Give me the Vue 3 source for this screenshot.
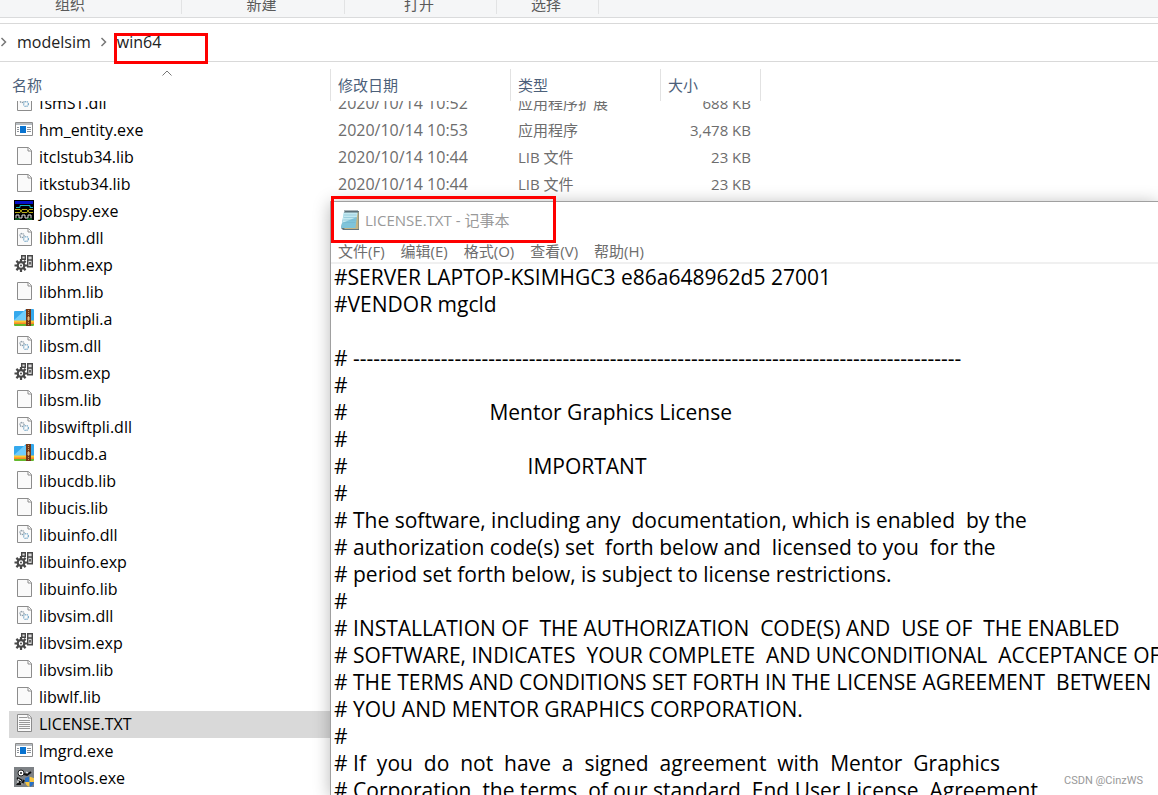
<script setup>
const groups = [
  { label: '组织', cls: 'g1' },
  { label: '新建', cls: 'g2' },
  { label: '打开', cls: 'g3' },
  { label: '选择', cls: 'g4' },
]

const files = [
  { name: 'fsmST.dll', icon: 'dll', date: '2020/10/14 10:52', type: '应用程序扩展', size: '688 KB' },
  { name: 'hm_entity.exe', icon: 'exe', date: '2020/10/14 10:53', type: '应用程序', size: '3,478 KB' },
  { name: 'itclstub34.lib', icon: 'lib', date: '2020/10/14 10:44', type: 'LIB 文件', size: '23 KB' },
  { name: 'itkstub34.lib', icon: 'lib', date: '2020/10/14 10:44', type: 'LIB 文件', size: '23 KB' },
  { name: 'jobspy.exe', icon: 'spy' },
  { name: 'libhm.dll', icon: 'dll' },
  { name: 'libhm.exp', icon: 'exp' },
  { name: 'libhm.lib', icon: 'lib' },
  { name: 'libmtipli.a', icon: 'zip' },
  { name: 'libsm.dll', icon: 'dll' },
  { name: 'libsm.exp', icon: 'exp' },
  { name: 'libsm.lib', icon: 'lib' },
  { name: 'libswiftpli.dll', icon: 'dll' },
  { name: 'libucdb.a', icon: 'zip' },
  { name: 'libucdb.lib', icon: 'lib' },
  { name: 'libucis.lib', icon: 'lib' },
  { name: 'libuinfo.dll', icon: 'dll' },
  { name: 'libuinfo.exp', icon: 'exp' },
  { name: 'libuinfo.lib', icon: 'lib' },
  { name: 'libvsim.dll', icon: 'dll' },
  { name: 'libvsim.exp', icon: 'exp' },
  { name: 'libvsim.lib', icon: 'lib' },
  { name: 'libwlf.lib', icon: 'lib' },
  { name: 'LICENSE.TXT', icon: 'txt', selected: true },
  { name: 'lmgrd.exe', icon: 'exe' },
  { name: 'lmtools.exe', icon: 'tools' },
]

const menus = ['文件(F)', '编辑(E)', '格式(O)', '查看(V)', '帮助(H)']

const license = [
  '#SERVER LAPTOP-KSIMHGC3 e86a648962d5 27001',
  '#VENDOR mgcld',
  '',
  '# ' + '-'.repeat(90),
  '#',
  '#' + ' '.repeat(26) + 'Mentor Graphics License',
  '#',
  '#' + ' '.repeat(33) + 'IMPORTANT',
  '#',
  '# The software, including any  documentation, which is enabled  by the',
  '# authorization code(s) set  forth below and  licensed to you  for the',
  '# period set forth below, is subject to license restrictions.',
  '#',
  '# INSTALLATION OF  THE AUTHORIZATION  CODE(S) AND  USE OF  THE ENABLED',
  '# SOFTWARE, INDICATES  YOUR COMPLETE  AND UNCONDITIONAL  ACCEPTANCE OF',
  '# THE TERMS AND CONDITIONS SET FORTH IN THE LICENSE AGREEMENT  BETWEEN',
  '# YOU AND MENTOR GRAPHICS CORPORATION.',
  '#',
  '# If  you  do  not  have  a  signed  agreement  with  Mentor  Graphics',
  '# Corporation, the terms  of our standard  End User License  Agreement',
].join('\n')
</script>

<template>
  <main class="desktop">
    <div class="ribbon">
      <div v-for="g in groups" :key="g.label" class="group" :class="g.cls">{{ g.label }}</div>
    </div>
    <nav class="address">
      <svg class="sep" viewBox="0 0 8 12"><path d="M1.5 2l4 4-4 4" /></svg>
      <a href="#" class="crumb">modelsim</a>
      <svg class="sep" viewBox="0 0 8 12"><path d="M1.5 2l4 4-4 4" /></svg>
      <a href="#" class="crumb">win64</a>
      <span class="mark mark-path"></span>
    </nav>

    <table class="files">
      <colgroup><col class="c-name" /><col class="c-date" /><col class="c-type" /><col class="c-size" /><col /></colgroup>
      <thead>
        <tr>
          <th scope="col">
            <span>名称</span>
            <svg class="sort" viewBox="0 0 10 6"><path d="M.5 5.5L5 1l4.500 4.500" /></svg>
          </th>
          <th scope="col">修改日期</th>
          <th scope="col">类型</th>
          <th scope="col">大小</th>
          <td></td>
        </tr>
      </thead>
      <tbody>
        <tr v-for="(f, i) in files" :key="f.name" :class="{ cut: i === 0, selected: f.selected }">
          <td>
            <div class="cell name">
              <svg class="icon" viewBox="0 0 20 20">
                <g v-if="f.icon === 'lib' || f.icon === 'dll' || f.icon === 'txt'">
                  <path d="M3.500 1.500h11l3 3v14h-14z" fill="#fafafa" stroke="#8c8c8c" />
                  <path d="M14 1.500v3.500h3.500" fill="#fff" stroke="#8c8c8c" />
                </g>
                <g v-if="f.icon === 'dll'" fill="none" stroke-dasharray="1.200 .6">
                  <circle cx="8" cy="8.500" r="2" stroke="#8797a3" stroke-width="1.300" />
                  <circle cx="12" cy="12" r="2.400" stroke="#78a9c9" stroke-width="1.300" />
                </g>
                <path v-if="f.icon === 'txt'" d="M5 4.500h8M5 7.500h11M5 9.500h11M5 11.500h11M5 13.500h11M5 15.500h11" stroke="#999" />
                <g v-if="f.icon === 'exe'">
                  <path d="M1.500 3.500h17v13h-17z" fill="#fff" stroke="#8c8c8c" />
                  <path d="M2 4h16v2H2z" fill="#b7bdc2" />
                  <path d="M6 7h6v7H6z" fill="#0873d0" />
                  <path d="M3 8.500h2M3 10.500h2M3 12.500h2M13 8.500h4M13 10.500h4M13 12.500h4" stroke="#8c9299" />
                </g>
                <g v-if="f.icon === 'exp'">
                  <path d="M7 5v13M.5 11.500h13M2.400 6.900l9.200 9.200M11.600 6.900l-9.200 9.200" stroke="#484848" stroke-width="2.200" />
                  <circle cx="7" cy="11.500" r="3.300" fill="#fff" stroke="#484848" stroke-width="2.200" />
                  <circle cx="7" cy="11.500" r="1" fill="#484848" />
                  <path d="M7.700 1.700h3.600v3.600H7.700z" fill="#ddd" stroke="#484848" stroke-width="1.400" />
                  <path d="M13.700 1.700h4.600v11h-4.600z" fill="#ddd" stroke="#484848" stroke-width="1.400" />
                  <path d="M13 6h6M16 8v2.500" stroke="#484848" stroke-width="1.600" />
                </g>
                <g v-if="f.icon === 'zip'">
                  <path d="M0 4q0-1 1-1h9l2-2h7q1 0 1 1v11H0z" fill="#35a9ed" />
                  <path d="M0 12L10 3h3v10H0z" fill="#70cdfb" />
                  <path d="M0 12.500h20V15H0z" fill="#ffc931" />
                  <path d="M0 14.500h20v2H0z" fill="#f98b25" />
                  <path d="M0 16h20v1q0 1-1 1H1q-1 0-1-1z" fill="#65b82e" />
                  <path d="M12 1h5v17h-5z" fill="#743716" />
                  <path d="M14.500 2v16" stroke="#c99a5c" stroke-dasharray="1 1" />
                  <path d="M13.500 9h2v3h-2z" fill="#e6b97e" />
                </g>
                <g v-if="f.icon === 'spy'" fill="none">
                  <path d="M0 0h20v20H0z" fill="#000" />
                  <path d="M1 1h18v3H1z" fill="#0610c8" />
                  <path d="M2 7.500h4v-2h10v2h3" stroke="#16b5c1" />
                  <path d="M1 9.500h5l2 3h5l2-3h4M1 12.500h5l2-3h5l2 3h4" stroke="#b9ae16" />
                  <path d="M2 18v-3h3v3h3v-3h3v3h3v-3h3v3" stroke="#ddd" />
                  <path d="M1 19h5M13 19h5" stroke="#16a13a" />
                </g>
                <g v-if="f.icon === 'tools'" fill="none">
                  <path d="M0 0h20v20H0z" fill="#7d8185" />
                  <circle cx="7" cy="6" r="3" fill="#fff" stroke="#222" />
                  <circle cx="7" cy="6" r="1" fill="#222" />
                  <path d="M10 7l3 1 4-3M3 11l4 2-3 4h4l2-4" stroke="#111" stroke-width="2" />
                  <path d="M4 12l3 2M12 5l2 1M3 15h2M7 17h2" stroke="#fff" />
                  <path d="M11 11l4.500-1.500L20 11v4q-1 4-4.500 5-3.500-1-4.500-5z" fill="#2870c6" />
                  <path d="M15.500 9.500L20 11v4h-4.500zM11 15h4.500v5q-3.500-1-4.500-5z" fill="#f8c540" />
                </g>
              </svg>
              <span>{{ f.name }}</span>
            </div>
          </td>
          <td><div class="cell date">{{ f.date }}</div></td>
          <td><div class="cell">{{ f.type }}</div></td>
          <td><div class="cell size">{{ f.size }}</div></td>
          <td></td>
        </tr>
      </tbody>
    </table>

    <section class="notepad">
      <header class="title">
        <svg class="pad" viewBox="0 0 20 22">
          <path d="M5 2h14v19H3l-2-2z" fill="#65767e" />
          <path d="M17 3h1.500v17H4z" fill="#c6b583" />
          <path d="M4 3h13.500l-2 16H1z" fill="#7fc4da" />
          <path d="M4 3h13.500l-.6 5L2.200 14z" fill="#c2e9f1" />
          <path d="M4 6h12.500M3.600 8.500h12.500M3.200 11h12.500M2.800 13.500h12.500" stroke="#72b3ca" stroke-width=".5" />
          <path d="M5 1v3M7 1v3M9 1v3M11 1v3M13 1v3M15 1v3M17 1v3" stroke="#526870" />
        </svg>
        <h1>LICENSE.TXT - 记事本</h1>
        <span class="mark mark-title"></span>
      </header>
      <div class="menu" role="menubar">
        <button v-for="m in menus" :key="m" type="button" role="menuitem">{{ m }}</button>
      </div>
      <textarea class="editor" aria-label="LICENSE.TXT" wrap="off" spellcheck="false" readonly :value="license"></textarea>
    </section>
    <div class="watermark">CSDN @CinzWS</div>
  </main>
</template>

<style>
html, body, #app { height: 100%; }
body { margin: 0; overflow: hidden; }
</style>

<style scoped>
.desktop {
  position: relative;
  height: 100%;
  overflow: hidden;
  background: #fff;
  color: #111;
  font-family: "Open Sans", "Noto Sans CJK SC", sans-serif;
  font-size: 15px;
}
.ribbon {
  box-sizing: border-box;
  display: flex;
  height: 18px;
  overflow: hidden;
  background: #f5f6f7;
  border-bottom: 1px solid #dadbdc;
}
.group {
  box-sizing: border-box;
  display: flex;
  align-items: flex-end;
  justify-content: center;
  height: 14px;
  line-height: 20px;
  padding-right: 3px;
  border-right: 1px solid #e2e3e4;
  color: #5a5a5a;
}
.g1 { width: 182px; padding-right: 41px; }
.g2 { width: 163px; }
.g3 { width: 152px; }
.g4 { width: 102px; }
.address {
  position: relative;
  box-sizing: border-box;
  display: flex;
  align-items: center;
  height: 39px;
  margin-top: 5px;
  padding-bottom: 2px;
  border-top: 1px solid #d9d9d9;
  border-bottom: 1px solid #d9d9d9;
}
.sep { width: 8px; height: 12px; fill: none; stroke: #777; stroke-width: 1.500; }
.crumb { color: #222; text-decoration: none; padding: 0 9px; font-size: 16px; }
.mark { position: absolute; box-sizing: border-box; border: 3px solid #fe0000; }
.mark-path { left: 114px; top: 9px; width: 94px; height: 31px; }

.files { width: 100%; table-layout: fixed; border-collapse: collapse; }
.c-name { width: 331px; }
.c-date { width: 180px; }
.c-type { width: 150px; }
.c-size { width: 100px; }
th, td { padding: 0; }
thead tr { height: 39px; }
th {
  position: relative;
  padding: 5px 0 0 7px;
  text-align: left;
  font-weight: 400;
  color: #4c607a;
  background: linear-gradient(#e2e2e2, #e2e2e2) right 7px / 1px 32px no-repeat;
}
th:first-child { padding-left: 12px; }
.sort { position: absolute; left: 162px; top: 8px; width: 10px; height: 6px; fill: none; stroke: #777; }
.cell {
  display: flex;
  align-items: center;
  height: 27px;
  padding-left: 7px;
  line-height: 27px;
  color: #6d6d6d;
  white-space: nowrap;
}
.name, .date { font-size: 16px; }
.name { padding-left: 5px; margin-left: 9px; color: #000; gap: 5px; }
.size { justify-content: flex-end; padding: 0 10px 0 0; }
.icon { width: 20px; height: 20px; flex: none; margin-bottom: 3px; }
.cut .cell { height: 16px; align-items: flex-end; overflow: hidden; }
.cut .icon { margin-bottom: 5px; }
.selected .name { background: #d9d9d9; }

.notepad {
  position: absolute;
  left: 330px;
  top: 201px;
  right: 0;
  bottom: 0;
  display: flex;
  flex-direction: column;
  background: #fff;
  border: solid #a0a0a0;
  border-width: 1px 0 0 1px;
  box-shadow: 0 2px 16px rgba(0, 0, 0, .28);
}
.title { position: relative; display: flex; align-items: center; height: 36px; padding-left: 9px; gap: 5px; }
.title h1 { margin: 0; font-size: 15px; line-height: 20px; font-weight: 400; color: #999; }
.pad { width: 20px; height: 22px; }
.mark-title { left: 0; top: -6px; width: 225px; height: 47px; }
.menu { display: flex; gap: 16px; height: 24px; padding-left: 7px; border-bottom: 2px solid #f0f0f0; }
.menu button { padding: 0; border: 0; background: none; font: inherit; color: #6d6d6d; white-space: nowrap; }
.editor {
  flex: 1;
  min-height: 0;
  padding: 0 0 0 3px;
  border: 0;
  outline: 0;
  resize: none;
  overflow: hidden;
  background: #fff;
  color: #000;
  font: 21px/27px "Open Sans", sans-serif;
}
.watermark {
  position: absolute;
  right: 15px;
  bottom: 7px;
  font: 11px/14px Roboto, sans-serif;
  color: #999;
}
</style>
